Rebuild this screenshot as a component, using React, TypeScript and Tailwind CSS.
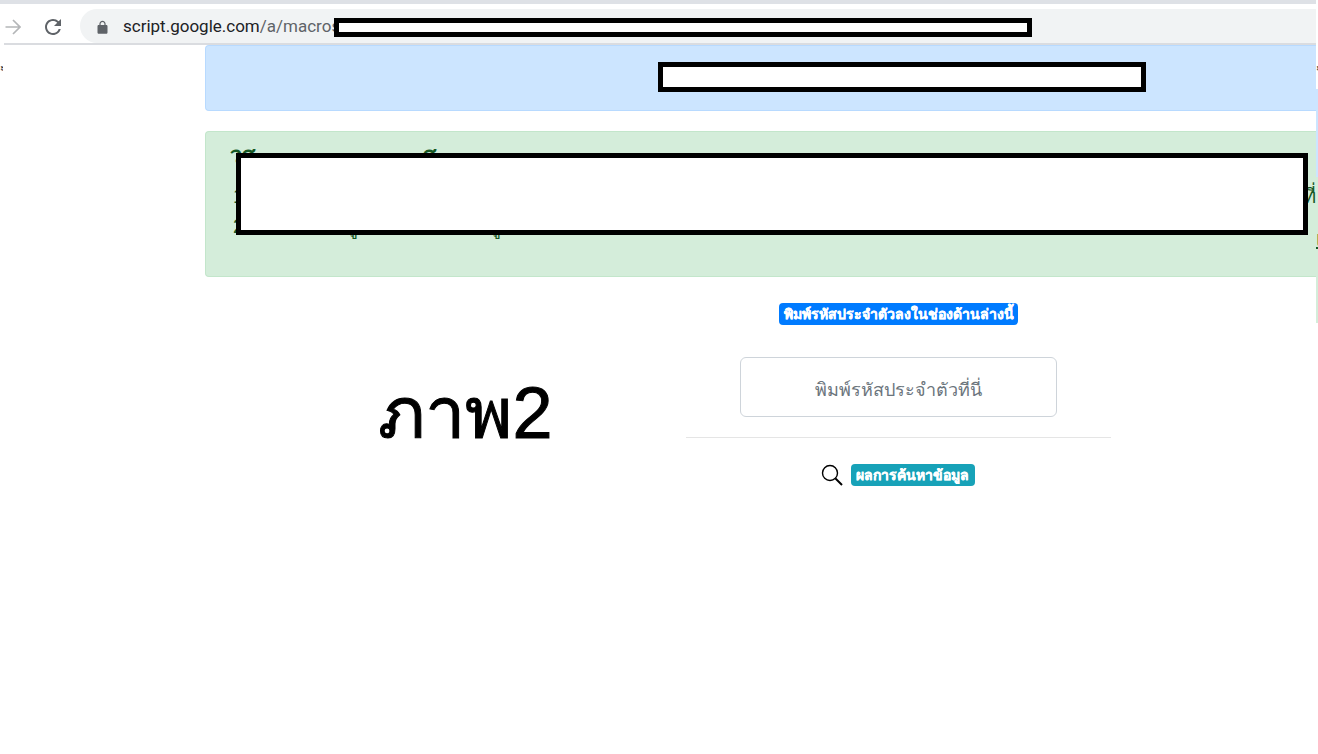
export default function App() {
  const thai = "font-['Liberation_Sans','Noto_Sans','DejaVu_Sans',sans-serif]";
  return (
    <div className={`relative h-[754px] w-[1318px] overflow-hidden bg-white ${thai}`}>
      <div className="w-[1316px]">
        <div className="h-[4px] bg-[#dee1e6]" />
        <div className="flex h-[41px] items-start pt-[5px] pl-[4px]">
          <svg viewBox="0 0 16 16" className="mt-[10px] ml-[1px] h-[16px] w-[16px] fill-none stroke-[#b4b6b8] stroke-[1.7]"><path d="M0.5 8H15M8 1l7 7-7 7" /></svg>
          <svg viewBox="0 0 24 24" className="mt-[6px] ml-[20px] h-[24px] w-[24px] fill-[#5f6368]"><path d="M17.65 6.35A7.958 7.958 0 0 0 12 4c-4.42 0-7.99 3.58-7.99 8s3.57 8 7.99 8c3.73 0 6.84-2.55 7.73-6h-2.08A5.99 5.99 0 0 1 12 18c-3.31 0-6-2.69-6-6s2.69-6 6-6c1.66 0 3.14.69 4.22 1.78L13 11h7V4l-2.35 2.35z" /></svg>
          <div className="ml-[15px] flex h-[34px] flex-1 items-center rounded-l-full bg-[#f1f3f4] pl-[15px] pt-[2px]">
            <svg viewBox="0 0 24 24" className="h-[15px] w-[15px] fill-[#5f6368]"><path d="M18 8h-1V6c0-2.76-2.24-5-5-5S7 3.24 7 6v2H6c-1.1 0-2 .9-2 2v10c0 1.1.9 2 2 2h12c1.1 0 2-.9 2-2V10c0-1.1-.9-2-2-2zM9 8V6c0-1.66 1.34-3 3-3s3 1.34 3 3v2H9z" /></svg>
            <span className="ml-[13px] font-['Roboto',sans-serif] text-[17px] text-[#202124]">script.google.com<span className="text-[#5f6368]">/a/macros</span></span>
          </div>
        </div>
      </div>
      <div className="absolute left-[4px] top-[43px] h-[2px] w-[1312px] bg-[#dadce0]" />

      <div className="flex">
        <div className="w-[205px] pt-[16px] text-[11px] leading-[12px] text-[#222]"><span className="block w-[3px] overflow-hidden">ะ</span></div>
        <div className="w-[1111px]">
          <div className="h-[66px] rounded-l-[4px] border border-r-0 border-[#b8daff] bg-[#cce5ff]" />
          <div className="mt-[20px] h-[146px] overflow-hidden rounded-l-[4px] border border-r-0 border-[#c3e6cb] bg-[#d4edda] pl-[24px] pt-[11px] text-[#155724]">
            <div className="flex text-[22px] font-bold leading-[26px]"><span>วส</span><span className="ml-[168px]">ส</span></div>
            <div className="mt-[12px] flex justify-between pl-[3px] text-[20px] leading-[30px]"><span>1</span><span>ที่</span></div>
            <div className="flex pl-[3px] text-[20px] leading-[30px]"><span className="w-[108px]">2</span><span>ญู</span><span className="ml-[126px]">ญู</span></div>
          </div>
          <div className="flex">
            <div className="flex w-[481px] justify-center pl-[40px] pt-[92px]">
              <span className="text-[72px] leading-[88px] text-black [-webkit-text-stroke:1px_black]">ภาพ2</span>
            </div>
            <div className="flex w-[425px] flex-col items-center pt-[26px]">
              <span className="flex h-[22px] w-[239px] items-center justify-center rounded-[4px] bg-[#007bff] text-[14px] font-bold text-white [-webkit-text-stroke:0.3px_white]">พิมพ์รหัสประจำตัวลงในช่องด้านล่างนี้</span>
              <input placeholder="พิมพ์รหัสประจำตัวที่นี่" className="mt-[32px] h-[60px] w-[317px] rounded-[6px] border border-[#ced4da] bg-white pt-[6px] text-center text-[18px] placeholder:text-[#6c757d]" />
              <div className="mt-[20px] h-px w-full bg-[#e5e5e5]" />
              <div className="mt-[26px] flex items-center pr-[2px]">
                <svg viewBox="0 0 22 22" className="h-[22px] w-[22px] fill-none stroke-black"><circle cx="9" cy="9" r="7.5" strokeWidth="1.4" /><path d="M14.5 14.5L21 21" strokeWidth="2" /></svg>
                <span className="ml-[8px] flex h-[22px] w-[124px] items-center justify-center rounded-[4px] bg-[#17a2b8] text-[14px] font-bold text-white [-webkit-text-stroke:0.3px_white]">ผลการค้นหาข้อมูล</span>
              </div>
            </div>
          </div>
        </div>
        <div className="w-[2px]">
          <div className="h-[44px] overflow-hidden pt-[16px] text-[11px] leading-[12px] text-[#222]">ะ</div>
          <div className="h-[88px] bg-[#cce5ff]" />
          <div className="h-[146px] overflow-hidden bg-[#d4edda] pt-[50px] text-[20px] leading-[24px] text-[#155724] underline">เ</div>
        </div>
      </div>

      <div className="absolute left-[334px] top-[18px] h-[19px] w-[698px] border-[5px] border-black bg-white" />
      <div className="absolute left-[658px] top-[62px] h-[30px] w-[488px] border-[5px] border-black bg-white" />
      <div className="absolute left-[236px] top-[153px] h-[82px] w-[1072px] border-[5px] border-black bg-white" />
    </div>
  );
}
